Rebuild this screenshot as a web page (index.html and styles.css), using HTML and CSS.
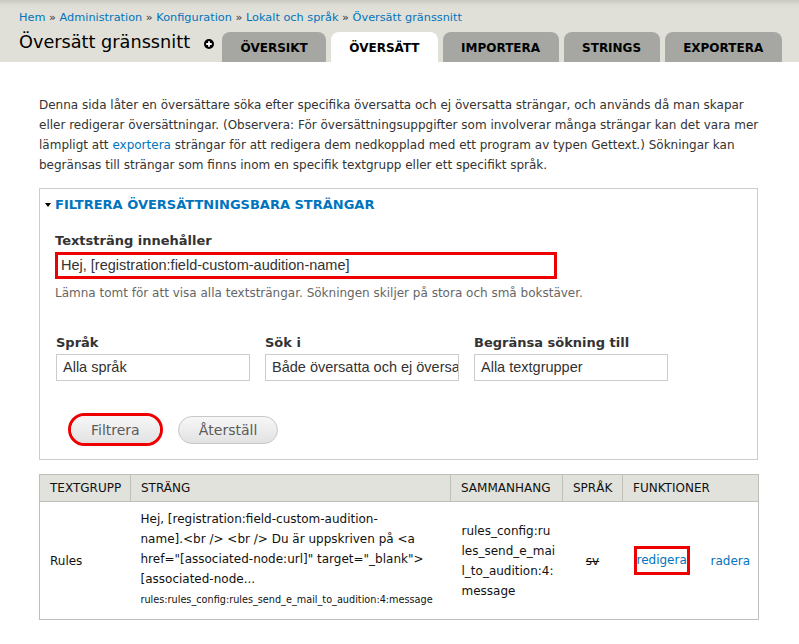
FILE: index.html
```html
<!DOCTYPE html>
<html lang="sv">
<head>
<meta charset="utf-8">
<title>Översätt gränssnitt</title>
<link rel="stylesheet" href="styles.css">
</head>
<body>
<header class="branding">
  <nav class="breadcrumb">
    <a href="#">Hem</a> » <a href="#">Administration</a> » <a href="#">Konfiguration</a> » <a href="#">Lokalt och språk</a> » <a href="#">Översätt gränssnitt</a>
  </nav>
  <div class="title-row">
    <h1 class="page-title">Översätt gränssnitt</h1>
    <span class="shortcut"><svg width="10" height="10" viewBox="0 0 10 10"><circle cx="5" cy="5" r="5" fill="#000"/><path d="M5 2.2v5.6M2.2 5h5.6" stroke="#fff" stroke-width="1.8"/></svg></span>
    <ul class="tabs">
      <li><a href="#">Översikt</a></li>
      <li class="active"><a href="#">Översätt</a></li>
      <li><a href="#">Importera</a></li>
      <li><a href="#">Strings</a></li>
      <li><a href="#">Exportera</a></li>
    </ul>
  </div>
</header>
<main class="page">
  <p class="intro">Denna sida låter en översättare söka efter specifika översatta och ej översatta strängar, och används då man skapar<br>eller redigerar översättningar. (Observera: För översättningsuppgifter som involverar många strängar kan det vara mer<br>lämpligt att <a href="#">exportera</a> strängar för att redigera dem nedkopplad med ett program av typen Gettext.) Sökningar kan<br>begränsas till strängar som finns inom en specifik textgrupp eller ett specifikt språk.</p>

  <section class="fieldset">
    <div class="legend"><span class="arrow"></span>Filtrera översättningsbara strängar</div>
    <div class="field">
      <label class="label">Textsträng innehåller</label>
      <div class="mark"><div class="input">Hej, [registration:field-custom-audition-name]</div></div>
      <div class="description">Lämna tomt för att visa alla textsträngar. Sökningen skiljer på stora och små bokstäver.</div>
    </div>
    <div class="selects">
      <div class="sel"><label class="label">Språk</label><div class="input">Alla språk</div></div>
      <div class="sel"><label class="label">Sök i</label><div class="input">Både översatta och ej översatta</div></div>
      <div class="sel"><label class="label">Begränsa sökning till</label><div class="input">Alla textgrupper</div></div>
    </div>
    <div class="actions">
      <span class="mark-btn"><button class="button">Filtrera</button></span>
      <button class="button">Återställ</button>
    </div>
  </section>

  <table class="results">
    <colgroup>
      <col class="w1"><col class="w2"><col class="w3"><col class="w4"><col class="w5"><col class="w6">
    </colgroup>
    <thead>
      <tr><th>Textgrupp</th><th>Sträng</th><th>Sammanhang</th><th>Språk</th><th colspan="2">Funktioner</th></tr>
    </thead>
    <tbody>
      <tr>
        <td>Rules</td>
        <td class="str">Hej, [registration:field-custom-audition-<wbr><span class="nw">name].&lt;br</span> /&gt; &lt;br /&gt; Du är uppskriven på &lt;a <span class="nw">href="[associated-node:url]"</span> <span class="nw">target="_blank"&gt;</span> [associated-node...<br><small>rules:rules_config:rules_send_e_mail_to_audition:4:message</small></td>
        <td class="ctx">rules_config:ru<wbr>les_send_e_mai<wbr>l_to_audition:4:<wbr>message</td>
        <td class="lang"><del>sv</del></td>
        <td class="op1"><a href="#" class="mark-link">redigera</a></td>
        <td class="op2"><a href="#">radera</a></td>
      </tr>
    </tbody>
  </table>
</main>
</body>
</html>
```
FILE: styles.css
```css
html, body {
  margin: 0;
  padding: 0;
}
body {
  font-family: "DejaVu Sans", Verdana, sans-serif;
  font-size: 13px;
  color: #333;
  background: #fff;
}
a {
  color: #0074bd;
  text-decoration: none;
}
.branding {
  background: linear-gradient(#c9c9c2 0px, #dcdcd4 5px, #e0e0d8 9px);
  padding: 10px 0 0 19px;
}
.breadcrumb {
  font-size: 11.3px;
  line-height: 15px;
  color: #333;
}
.title-row {
  display: flex;
  align-items: flex-end;
  height: 37px;
}
.page-title {
  font-size: 17.7px;
  font-weight: normal;
  color: #000;
  margin: 0;
  line-height: 24px;
  white-space: nowrap;
  align-self: flex-start;
  padding-top: 5px;
}
.shortcut {
  display: inline-flex;
  align-self: flex-start;
  margin: 14px 0 0 14px;
}
.tabs {
  list-style: none;
  display: flex;
  gap: 5px;
  margin: 0 0 0 8px;
  padding: 0;
}
.tabs li a {
  display: block;
  background: #a6a7a2;
  color: #000;
  font-weight: bold;
  font-size: 12px;
  text-transform: uppercase;
  padding: 0 18.5px;
  height: 30px;
  line-height: 32px;
  border-radius: 8px 8px 0 0;
  white-space: nowrap;
}
.tabs li.active a {
  background: #fff;
  padding: 0 18px;
}
.page {
  padding: 33px 41px 20px 39px;
}
.intro {
  margin: 0;
  font-size: 12px;
  line-height: 20px;
  white-space: nowrap;
}
.fieldset {
  border: 1px solid #ccc;
  margin-top: 13px;
  padding: 7px 15px 13px 15px;
}
.legend {
  color: #0074bd;
  font-weight: bold;
  text-transform: uppercase;
  line-height: 18px;
  margin-left: -10px;
  display: flex;
  align-items: center;
}
.arrow {
  display: inline-block;
  width: 0;
  height: 0;
  border-left: 3px solid transparent;
  border-right: 3px solid transparent;
  border-top: 4px solid #000;
  margin-right: 4px;
}
.label {
  display: block;
  font-weight: bold;
  line-height: 16px;
}
.field {
  margin-top: 19px;
}
.field .label {
  margin-bottom: 3px;
}
.mark {
  border: 3px solid #e00;
  width: 502px;
  box-sizing: border-box;
}
.input {
  border: 1px solid #ccc;
  height: 27px;
  box-sizing: border-box;
  padding: 0 6px;
  font-family: "Liberation Sans", Arial, sans-serif;
  font-size: 14.5px;
  line-height: 25px;
  color: #333;
  white-space: nowrap;
  overflow: hidden;
  background: #fff;
}
.mark .input {
  border: 0;
  height: 21px;
  line-height: 21px;
  padding: 0 3px;
}
.description {
  font-size: 12px;
  color: #666;
  margin-top: 7px;
  line-height: 15px;
}
.selects {
  display: flex;
  gap: 15px;
  margin-top: 34px;
  padding-left: 1px;
}
.sel {
  width: 194px;
}
.sel .label {
  margin-bottom: 3px;
}
.actions {
  display: flex;
  align-items: center;
  margin-top: 32px;
  padding-left: 13px;
  gap: 15px;
}
.button {
  font-family: "DejaVu Sans", Verdana, sans-serif;
  font-size: 14px;
  color: #5a5a5a;
  background: linear-gradient(#f7f7f7, #e2e2e2);
  border: 1px solid #c8c8c8;
  border-radius: 15px;
  height: 28px;
  padding: 0 20px;
  cursor: pointer;
}
.mark-btn {
  display: inline-flex;
  border: 3px solid #e00;
  border-radius: 17px;
  overflow: hidden;
}
.mark-btn .button {
  border: 0;
  border-radius: 14px;
  height: 27px;
  padding: 0 20px;
}
.results {
  width: 100%;
  table-layout: fixed;
  border-collapse: collapse;
  margin-top: 14px;
  border: 1px solid #bebfb9;
}
.w1 { width: 91px; }
.w2 { width: 320px; }
.w3 { width: 112px; }
.w4 { width: 60px; }
.w5 { width: 76px; }
.w6 { width: 60px; }
.results th {
  background: #e1e2dc;
  font-weight: normal;
  text-transform: uppercase;
  text-align: left;
  font-size: 12px;
  color: #111;
  height: 27px;
  padding: 0 10px;
  border: 1px solid #bebfb9;
  box-sizing: border-box;
}
.results td {
  vertical-align: middle;
  padding: 8px 10px;
  font-size: 12px;
  line-height: 20px;
  color: #111;
}
.results td.str {
  padding: 7px 10px 8px 10px;
}
.nw {
  white-space: nowrap;
}
.results small {
  font-size: 9.7px;
  line-height: 22px;
}
.results td.ctx {
  padding: 8px 4px 8px 11px;
}
.results td.lang {
  text-align: center;
}
.results td.op1 {
  padding-left: 11px;
  padding-right: 0;
}
.results td.op2 {
  padding-left: 12px;
  padding-right: 0;
}
.mark-link {
  display: inline-block;
  border: 3px solid #e00;
  padding: 2px 0;
  line-height: 19px;
}
```
